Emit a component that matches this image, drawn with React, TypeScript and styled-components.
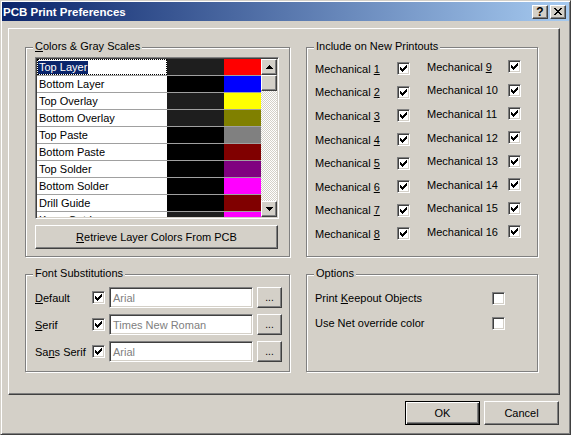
import React from 'react';
import styled, { createGlobalStyle, css } from 'styled-components';

const GlobalStyle = createGlobalStyle`
  html, body { margin: 0; padding: 0; background: #d4d0c8; }
  body { font-family: "Liberation Sans", Arial, sans-serif; font-size: 11px; color: #000; }
  * { box-sizing: border-box; }
`;

const raised = css`
  border: 1px solid;
  border-color: #fff #404040 #404040 #fff;
  box-shadow: inset -1px -1px #808080;
  background: #d4d0c8;
`;

const sunken = css`
  border: 1px solid;
  border-color: #808080 #fff #fff #808080;
  box-shadow: inset 1px 1px #404040, inset -1px -1px #d4d0c8;
`;

const Window = styled.div`
  width: 571px;
  height: 435px;
  border: 1px solid;
  border-color: #d4d0c8 #404040 #404040 #d4d0c8;
  box-shadow: inset 1px 1px #fff, inset -1px -1px #808080;
  padding: 1px;
  background: #d4d0c8;
  display: flex;
  flex-direction: column;
`;

const TitleBar = styled.div`
  height: 19px;
  display: flex;
  align-items: center;
  padding: 0 3px 0 1px;
  background: linear-gradient(to right, #0a246a, #a6caf0);
  color: #fff;
  font-weight: bold;
  font-size: 11.5px;
`;

const TitleText = styled.span`
  flex: 1;
  white-space: nowrap;
`;

const TitleButtons = styled.div`
  display: flex;
  gap: 2px;
`;

const TitleButton = styled.div`
  ${raised};
  width: 16px;
  height: 14px;
  display: flex;
  align-items: center;
  justify-content: center;
  color: #000;
  font-weight: bold;
  font-size: 12px;
  line-height: 12px;
`;

const Body = styled.div`
  margin: 7px 0 0 6px;
  width: 552px;
  display: flex;
  flex-direction: column;
  gap: 6px;
`;

const Panel = styled.div`
  height: 367px;
  border: 1px solid;
  border-color: #fff #404040 #404040 #fff;
  box-shadow: inset -1px -1px #808080;
  padding: 18px 0 0 16px;
  display: grid;
  grid-template-columns: 265px 232px;
  grid-template-rows: 210px 98px;
  column-gap: 16px;
  row-gap: 17px;
`;

const Group = styled.div<{ $pad: string }>`
  position: relative;
  border: 1px solid #808080;
  box-shadow: inset 1px 1px #fff, 1px 1px #fff;
  padding: ${(p) => p.$pad};
`;

const Legend = styled.span`
  position: absolute;
  top: -8px;
  left: 7px;
  padding: 0 2px;
  background: #d4d0c8;
  line-height: 13px;
  white-space: nowrap;
`;

const List = styled.div`
  ${sunken};
  width: 244px;
  height: 162px;
  padding: 1px;
  background: #fff;
  display: flex;
  overflow: hidden;
`;

const Rows = styled.div`
  flex: 1;
  overflow: hidden;
`;

const Row = styled.div`
  display: flex;
  height: 17px;
  border-bottom: 1px solid #a0a0a0;
`;

const NameCell = styled.div<{ $focus?: boolean }>`
  width: 130px;
  padding-left: 1px;
  line-height: 16px;
  background: #fff;
  white-space: nowrap;
  ${(p) =>
    p.$focus &&
    css`
      outline: 1px dotted #000;
      outline-offset: -1px;
    `}
`;

const NameText = styled.span<{ $selected?: boolean }>`
  padding: 0 1px 1px;
  ${(p) =>
    p.$selected &&
    css`
      background: #0a246a;
      color: #fff;
    `}
`;

const Swatch = styled.div<{ $w: number; $c: string }>`
  width: ${(p) => p.$w}px;
  background: ${(p) => p.$c};
`;

const ScrollBar = styled.div`
  width: 16px;
  display: flex;
  flex-direction: column;
`;

const ScrollButton = styled.div`
  ${raised};
  height: 16px;
  flex: none;
  display: flex;
  align-items: center;
  justify-content: center;
`;

const ScrollTrack = styled.div`
  flex: 1;
  background: repeating-conic-gradient(#fff 0 25%, #d4d0c8 0 50%) 0 0 / 2px 2px;
`;

const PushButton = styled.div<{ $w: number; $h: number; $default?: boolean }>`
  ${raised};
  width: ${(p) => p.$w}px;
  height: ${(p) => p.$h}px;
  display: flex;
  align-items: center;
  justify-content: center;
  white-space: nowrap;
  ${(p) =>
    p.$default &&
    css`
      border: 1px solid #000;
      box-shadow: inset 1px 1px #fff, inset -1px -1px #404040, inset -2px -2px #808080;
    `}
`;

const ColorsBody = styled.div`
  display: flex;
  flex-direction: column;
  gap: 6px;
`;

const FontRows = styled.div`
  display: flex;
  flex-direction: column;
  gap: 6px;
`;

const FontRow = styled.div`
  display: flex;
  align-items: center;
  height: 21px;
`;

const FieldLabel = styled.span<{ $w: number }>`
  width: ${(p) => p.$w}px;
  flex: none;
  white-space: nowrap;
`;

const TextBox = styled.div`
  ${sunken};
  width: 144px;
  height: 21px;
  margin-left: 4px;
  padding: 0 3px;
  background: #fff;
  color: #808080;
  display: flex;
  align-items: center;
`;

const DotsButton = styled(PushButton)`
  margin-left: 4px;
  font-size: 10px;
  align-items: flex-end;
  padding-bottom: 4px;
`;

const CheckBox = styled.span`
  ${sunken};
  width: 13px;
  height: 13px;
  flex: none;
  background: #fff;
  display: inline-block;
  position: relative;
`;

const CheckSvg = styled.svg`
  display: block;
`;

const MechColumns = styled.div`
  display: flex;
  gap: 17px;
`;

const MechColumn = styled.div<{ $shift: number }>`
  display: flex;
  flex-direction: column;
  margin-top: ${(p) => p.$shift}px;
`;

const MechRow = styled.div`
  display: flex;
  align-items: center;
  height: 23.6px;
`;

const OptionRows = styled.div`
  display: flex;
  flex-direction: column;
  gap: 5px;
`;

const OptionRow = styled.div`
  display: flex;
  align-items: center;
  height: 20px;
`;

const ButtonRow = styled.div`
  display: flex;
  justify-content: flex-end;
  gap: 4px;
  padding-right: 1px;
`;

const Acc = styled.u`
  text-decoration: underline;
`;

const checkCols = [2, 3, 4, 3, 2, 1, 0];
const checkPath = checkCols.map((r, c) => `M${c + 2} ${r + 2}h1v3h-1z`).join('');

const Check: React.FC<{ checked?: boolean }> = ({ checked }) => (
  <CheckBox>
    {checked && (
      <CheckSvg width="11" height="11" viewBox="0 0 11 11" shapeRendering="crispEdges">
        <path d={checkPath} fill="#000" />
      </CheckSvg>
    )}
  </CheckBox>
);

const Arrow: React.FC<{ down?: boolean }> = ({ down }) => (
  <svg width="7" height="4" viewBox="0 0 7 4" shapeRendering="crispEdges" style={down ? { transform: 'scaleY(-1)' } : undefined}>
    <path d="M3 0h1v1h-1zM2 1h3v1h-3zM1 2h5v1h-5zM0 3h7v1h-7z" fill="#000" />
  </svg>
);

const xRows = [
  [0, 1, 6, 7],
  [1, 2, 5, 6],
  [2, 3, 4, 5],
  [3, 4],
  [2, 3, 4, 5],
  [1, 2, 5, 6],
  [0, 1, 6, 7],
];
const xPath = xRows.map((cols, r) => cols.map((c) => `M${c} ${r}h1v1h-1z`).join('')).join('');

const layers = [
  { name: 'Top Layer', gray: '#1e1e1e', color: '#ff0000' },
  { name: 'Bottom Layer', gray: '#000000', color: '#0000ff' },
  { name: 'Top Overlay', gray: '#1e1e1e', color: '#ffff00' },
  { name: 'Bottom Overlay', gray: '#1e1e1e', color: '#808000' },
  { name: 'Top Paste', gray: '#000000', color: '#808080' },
  { name: 'Bottom Paste', gray: '#000000', color: '#800000' },
  { name: 'Top Solder', gray: '#000000', color: '#800080' },
  { name: 'Bottom Solder', gray: '#000000', color: '#ff00ff' },
  { name: 'Drill Guide', gray: '#000000', color: '#800000' },
  { name: 'Keep-Out Layer', gray: '#1e1e1e', color: '#ff00ff' },
];

const mechLabel = (n: number) =>
  n <= 9 ? (
    <>
      Mechanical <Acc>{n}</Acc>
    </>
  ) : (
    <>Mechanical {n}</>
  );

const fonts = [
  { label: <><Acc>D</Acc>efault</>, value: 'Arial' },
  { label: <><Acc>S</Acc>erif</>, value: 'Times New Roman' },
  { label: <>Sa<Acc>n</Acc>s Serif</>, value: 'Arial' },
];

export default function App() {
  return (
    <>
      <GlobalStyle />
      <Window>
        <TitleBar>
          <TitleText>PCB Print Preferences</TitleText>
          <TitleButtons>
            <TitleButton>?</TitleButton>
            <TitleButton>
              <svg width="8" height="7" viewBox="0 0 8 7" shapeRendering="crispEdges">
                <path d={xPath} fill="#000" />
              </svg>
            </TitleButton>
          </TitleButtons>
        </TitleBar>
        <Body>
          <Panel>
            <Group $pad="9px 0 0 9px">
              <Legend>
                <Acc>C</Acc>olors &amp; Gray Scales
              </Legend>
              <ColorsBody>
                <List>
                  <Rows>
                    {layers.map((l, i) => (
                      <Row key={l.name}>
                        <NameCell $focus={i === 0}>
                          <NameText $selected={i === 0}>{l.name}</NameText>
                        </NameCell>
                        <Swatch $w={57} $c={l.gray} />
                        <Swatch $w={37} $c={l.color} />
                      </Row>
                    ))}
                  </Rows>
                  <ScrollBar>
                    <ScrollButton>
                      <Arrow />
                    </ScrollButton>
                    <ScrollButton />
                    <ScrollTrack />
                    <ScrollButton>
                      <Arrow down />
                    </ScrollButton>
                  </ScrollBar>
                </List>
                <PushButton $w={243} $h={24}>
                  <span>
                    <Acc>R</Acc>etrieve Layer Colors From PCB
                  </span>
                </PushButton>
              </ColorsBody>
            </Group>

            <Group $pad="8px 0 0 8px">
              <Legend>Include on New Printouts</Legend>
              <MechColumns>
                <MechColumn $shift={1}>
                  {[1, 2, 3, 4, 5, 6, 7, 8].map((n) => (
                    <MechRow key={n}>
                      <FieldLabel $w={82}>{mechLabel(n)}</FieldLabel>
                      <Check checked />
                    </MechRow>
                  ))}
                </MechColumn>
                <MechColumn $shift={-1}>
                  {[9, 10, 11, 12, 13, 14, 15, 16].map((n) => (
                    <MechRow key={n}>
                      <FieldLabel $w={81}>{mechLabel(n)}</FieldLabel>
                      <Check checked />
                    </MechRow>
                  ))}
                </MechColumn>
              </MechColumns>
            </Group>

            <Group $pad="12px 0 0 9px">
              <Legend>Font Substitutions</Legend>
              <FontRows>
                {fonts.map((f, i) => (
                  <FontRow key={i}>
                    <FieldLabel $w={57}>{f.label}</FieldLabel>
                    <Check checked />
                    <TextBox>{f.value}</TextBox>
                    <DotsButton $w={25} $h={21}>...</DotsButton>
                  </FontRow>
                ))}
              </FontRows>
            </Group>

            <Group $pad="13px 0 0 8px">
              <Legend>Options</Legend>
              <OptionRows>
                <OptionRow>
                  <FieldLabel $w={177}>
                    Print <Acc>K</Acc>eepout Objects
                  </FieldLabel>
                  <Check />
                </OptionRow>
                <OptionRow>
                  <FieldLabel $w={177}>Use Net override color</FieldLabel>
                  <Check />
                </OptionRow>
              </OptionRows>
            </Group>
          </Panel>
          <ButtonRow>
            <PushButton $w={75} $h={24} $default>
              OK
            </PushButton>
            <PushButton $w={75} $h={24}>
              Cancel
            </PushButton>
          </ButtonRow>
        </Body>
      </Window>
    </>
  );
}
